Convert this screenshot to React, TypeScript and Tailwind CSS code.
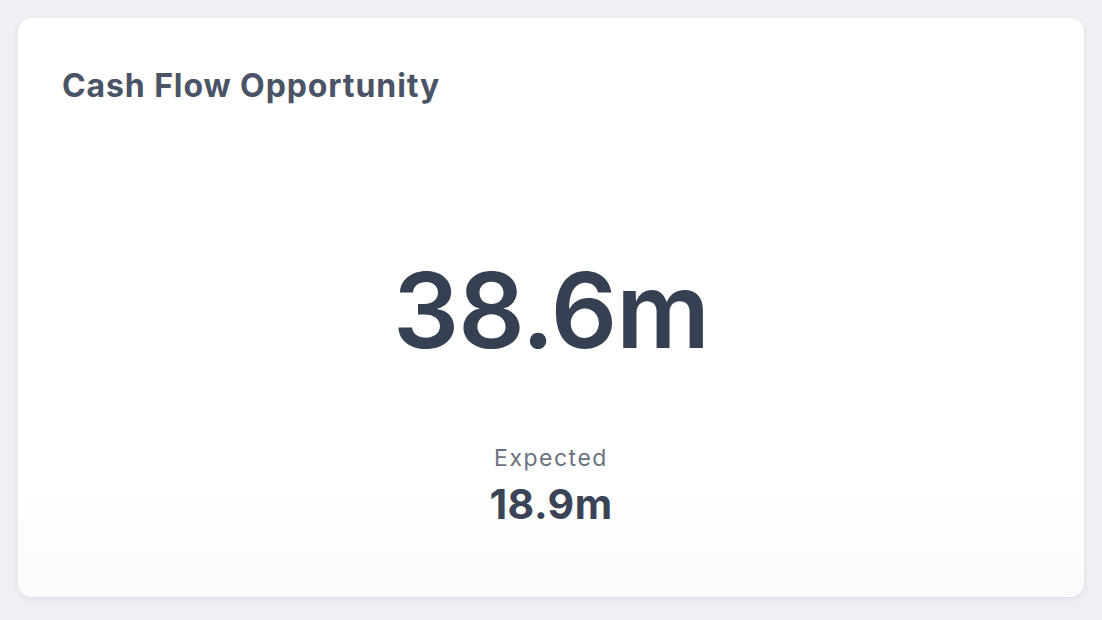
export default function App() {
  return (
    <div
      className="min-h-screen w-full bg-[#eef0f4] p-[18px]"
      style={{ fontFamily: "Inter, 'Liberation Sans', sans-serif" }}
    >
      <div className="flex h-[579px] w-[1066px] flex-col rounded-[14px] bg-gradient-to-b from-white from-80% to-[#fafbfc] px-[44px] pt-[52px] shadow-[0_2px_6px_rgba(15,23,42,0.08)]">
        <h2 className="text-[32px] font-bold leading-none tracking-[0.9px] text-[#4a5466]">
          Cash Flow Opportunity
        </h2>
        <div className="flex flex-1 flex-col items-center pt-[156px]">
          <div className="text-[104px] font-semibold leading-none tracking-[-1px] text-[#354052]">
            38.6m
          </div>
          <div className="mt-[85px] text-[23px] leading-none tracking-[1.5px] text-[#6b7280]">Expected</div>
          <div className="mt-[14px] text-[41px] font-bold leading-none tracking-[0.5px] text-[#3a4456]">18.9m</div>
        </div>
      </div>
    </div>
  );
}
